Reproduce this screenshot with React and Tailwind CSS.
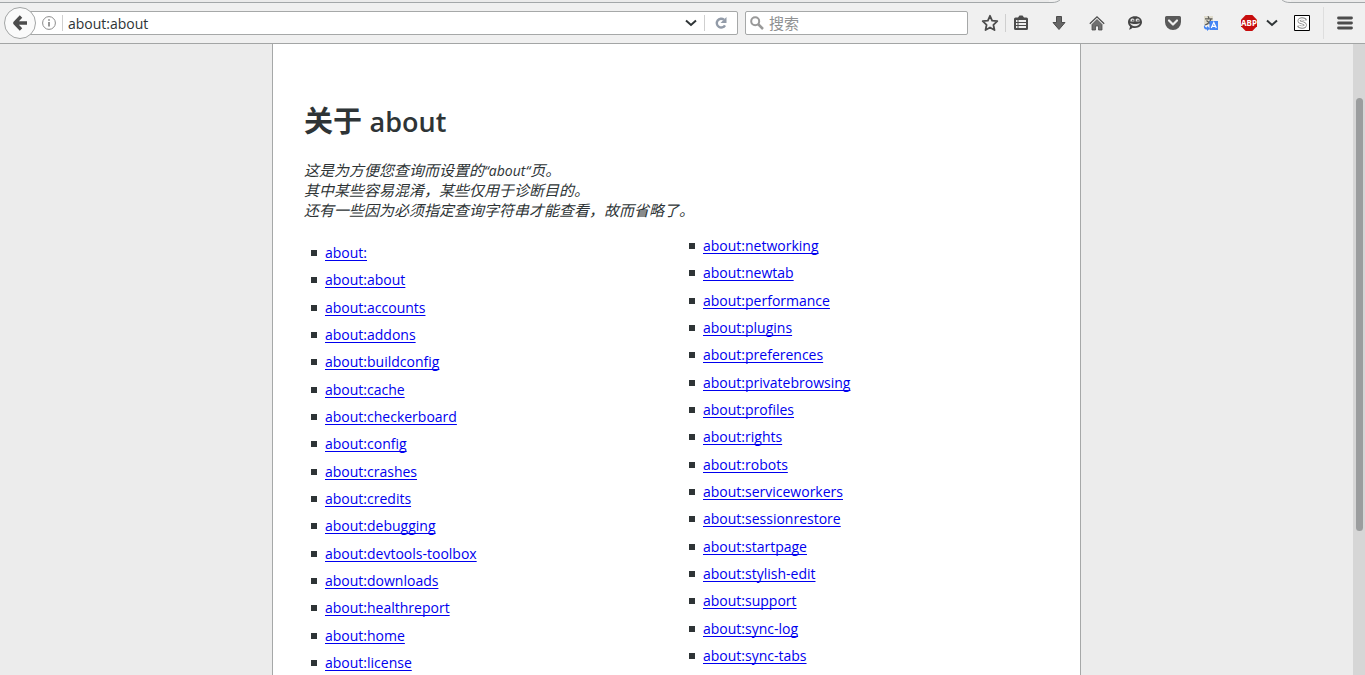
import React from 'react';

const leftLinks = [
  'about:', 'about:about', 'about:accounts', 'about:addons', 'about:buildconfig', 'about:cache',
  'about:checkerboard', 'about:config', 'about:crashes', 'about:credits', 'about:debugging',
  'about:devtools-toolbox', 'about:downloads', 'about:healthreport', 'about:home', 'about:license',
];

const rightLinks = [
  'about:networking', 'about:newtab', 'about:performance', 'about:plugins', 'about:preferences',
  'about:privatebrowsing', 'about:profiles', 'about:rights', 'about:robots', 'about:serviceworkers',
  'about:sessionrestore', 'about:startpage', 'about:stylish-edit', 'about:support', 'about:sync-log',
  'about:sync-tabs',
];

function LinkList({ links }) {
  return (
    <ul className="flex h-[430px] flex-col justify-between pl-[7px]">
      {links.map((link) => (
        <li key={link} className="flex h-5 items-center gap-2">
          <span className="size-1.5 bg-[#2e3436]" />
          <a
            href={link}
            className="leading-5 text-[#0000ee] underline decoration-1 underline-offset-2 [text-decoration-skip-ink:none]"
          >
            {link}
          </a>
        </li>
      ))}
    </ul>
  );
}

function TabStrip() {
  return (
    <div className="flex h-[3px] shrink-0">
      <div className="flex-1 border-b border-[#a3a7a9] bg-[#ebebeb]" />
      <svg width="12" height="3" viewBox="0 0 12 3" fill="none" stroke="#a3a7a9">
        <path d="M0 2.500h3c4 0 6-1 8.500-3" />
      </svg>
      <div className="w-[218px]" />
      <svg width="12" height="3" viewBox="0 0 12 3" fill="none" stroke="#a3a7a9">
        <path d="M12 2.500h-1c-4 0-6-1-8.500-3" />
      </svg>
      <div className="w-[74px] border-b border-[#a3a7a9] bg-[#ebebeb]" />
    </div>
  );
}

function ToolButton({ label, className, children }) {
  return (
    <button type="button" aria-label={label} className={`flex h-8 shrink-0 items-center justify-center ${className}`}>
      {children}
    </button>
  );
}

function Chevron() {
  return (
    <svg width="12" height="8" viewBox="0 0 12 8" fill="none" stroke="#2e3436" strokeWidth="2">
      <path d="M1 1.500l5 4.500 5-4.500" />
    </svg>
  );
}

function Toolbar() {
  return (
    <nav className="flex h-[41px] shrink-0 items-center border-b border-[#a3a5a5] bg-[#f0f0f0]">
      <button
        type="button"
        aria-label="后退"
        className="relative z-10 ml-1 flex size-8 shrink-0 items-center justify-center rounded-full border border-[#a3a5a5] bg-[#fafafa]"
      >
        <svg width="16" height="16" viewBox="0 0 16 16" fill="none" stroke="#4c4c4c" strokeWidth="3.400" strokeLinejoin="round">
          <path d="M9 1.500L2.800 8 9 14.500M3 8h12" />
        </svg>
      </button>
      <div className="-ml-4 flex h-6 flex-1 items-center rounded-r-xs border border-[#a6a8a8] bg-white pl-[21px]">
        <svg width="14" height="14" viewBox="0 0 14 14" fill="none" stroke="#8c8c8c" className="shrink-0">
          <circle cx="7" cy="7" r="6.400" />
          <path d="M7 6v4.500M7 3.200v1.600" strokeWidth="1.800" />
        </svg>
        <div className="ml-1.5 h-4 border-l border-[#cfcfcf]" />
        <input
          aria-label="地址"
          defaultValue="about:about"
          className="ml-[5px] h-5 min-w-0 flex-1 bg-transparent text-[#2e3436] outline-none"
        />
        <button type="button" aria-label="历史记录" className="mr-[7px] flex h-5 w-3 items-center">
          <Chevron />
        </button>
        <button type="button" aria-label="重新载入" className="flex h-4 w-[33px] items-center justify-center border-l border-[#cfcfcf]">
          <svg width="14" height="14" viewBox="0 0 14 14">
            <path d="M10 3.700A4.400 4.400 0 1 0 11 9.300" fill="none" stroke="#929ba8" strokeWidth="2.400" />
            <path d="M12.500 1v6H6.500z" fill="#929ba8" />
          </svg>
        </button>
      </div>
      <div className="ml-[7px] flex h-6 w-[223px] shrink-0 items-center rounded-xs border border-[#a6a8a8] bg-white pl-1">
        <svg width="14" height="14" viewBox="0 0 14 14" fill="none" stroke="#999" className="shrink-0">
          <circle cx="5.200" cy="5.200" r="4" strokeWidth="2" />
          <path d="M8 8l5 5" strokeWidth="2.500" />
        </svg>
        <input
          aria-label="搜索"
          placeholder="搜索"
          className="ml-[5px] h-5 min-w-0 flex-1 bg-transparent text-[15px] outline-none placeholder:text-[#8f9192]"
        />
      </div>

      <ToolButton label="加入书签" className="ml-1.5 w-8">
        <svg width="18" height="18" viewBox="0 0 18 18" fill="none" stroke="#4c4c4c" strokeWidth="1.800" strokeLinejoin="round">
          <path d="M9 1.800l2.100 4.900 5.200.500-3.900 3.600 1.100 5.300L9 13.400l-4.500 2.700 1.100-5.300L1.700 7.200l5.200-.500z" />
        </svg>
      </ToolButton>
      <div className="-ml-px h-[18px] border-l border-[#cfcfcf]" />
      <ToolButton label="书签列表" className="mr-[5px] w-[29px]">
        <svg width="16" height="16" viewBox="0 0 16 16">
          <path d="M5 2.500L6.500 .5h3L11 2.500h2.500A1.500 1.500 0 0 1 15 4v9.500a1.500 1.500 0 0 1-1.500 1.500h-11A1.500 1.500 0 0 1 1 13.500V4a1.500 1.500 0 0 1 1.500-1.500z" fill="#4c4c4c" />
          <path d="M3 5h1.500v2H3zM5.500 5H13v2H5.500zM3 8h1.500v2H3zM5.500 8H13v2H5.500zM3 11h1.500v2H3zM5.500 11H13v2H5.500z" fill="#f0f0f0" />
        </svg>
      </ToolButton>
      <ToolButton label="下载" className="w-[38px]">
        <svg width="16" height="16" viewBox="0 0 16 16">
          <path d="M5.500 1.500h5v6H14L8 14.500 2 7.500h3.500z" fill="#666" stroke="#4c4c4c" strokeLinejoin="round" />
        </svg>
      </ToolButton>
      <ToolButton label="主页" className="w-[38px]">
        <svg width="16" height="16" viewBox="0 0 16 16">
          <path d="M3 9.500l5-5 5 5V15H9.500v-4h-3v4H3z" fill="#707070" stroke="#4c4c4c" strokeWidth=".8" />
          <path d="M.8 8.800L8 1.800l7.200 7" fill="none" stroke="#4c4c4c" strokeWidth="1.300" />
        </svg>
      </ToolButton>
      <ToolButton label="聊天" className="w-[38px]">
        <svg width="16" height="16" viewBox="0 0 16 16">
          <path d="M8 1.200c4.200 0 7 2.500 7 5.900s-2.800 5.900-7 5.900c-.9 0-1.700-.1-2.500-.3-1 1.100-2.200 1.700-3.500 1.800.7-.9 1-1.900 1-3C1.700 10.400 1 8.900 1 7.100c0-3.400 2.800-5.900 7-5.900z" fill="#454545" />
          <path d="M3.600 4.600c.6-1.100 2.800-1.400 3.700-.4v2.300H3.400zM8.700 4.200c.9-1 3.100-.7 3.700.4l.2 1.900H8.700z" fill="#e4e4e4" />
          <path d="M5 4.800h1.600v1.400H5zM10.200 4.800h1.600v1.400h-1.600z" fill="#666" />
          <path d="M3 8c.6 2 2.400 3.200 5 3.200s4.400-1.200 5-3.200c-.8.500-1.500.7-2.200.8-1.800.3-3.800.3-5.600 0C4.500 8.700 3.800 8.500 3 8z" fill="#e4e4e4" />
        </svg>
      </ToolButton>
      <ToolButton label="Pocket" className="w-[38px]">
        <svg width="16" height="16" viewBox="0 0 16 16">
          <path d="M1.500 1h13A1.500 1.500 0 0 1 16 2.500V7a8 8 0 0 1-16 0V2.500A1.500 1.500 0 0 1 1.500 1z" fill="#5a5a5a" />
          <path d="M4 5.500l4 4 4-4" fill="none" stroke="#f0f0f0" strokeWidth="2.200" strokeLinecap="round" strokeLinejoin="round" />
        </svg>
      </ToolButton>
      <ToolButton label="翻译" className="w-[38px]">
        <svg width="16" height="16" viewBox="0 0 16 16">
          <path d="M1 1h9v9H1z" fill="#e0dccd" />
          <path d="M2 3.800h7.500M5 1.300l1 2M8 4C7 7 5 9 2 10M3.500 5.500L7 8.500" fill="none" stroke="#5c5c58" strokeWidth="1.200" />
          <path d="M6.500 6H15v9H6.500z" fill="#4385f4" />
          <path d="M8.300 13l2.500-5.500 2.500 5.500M9.300 11.300h3" fill="none" stroke="#fff" strokeWidth="1.200" />
          <path d="M1.500 9.500c0 2 1 3 2.500 3V11l3 2.500L4 16v-1.500c-2.500 0-4-2-2.500-5z" fill="#4385f4" />
        </svg>
      </ToolButton>
      <ToolButton label="Adblock Plus" className="ml-1 w-[30px]">
        <svg width="16" height="16" viewBox="0 0 16 16">
          <path d="M4.700 0h6.600L16 4.700v6.600L11.300 16H4.700L0 11.300V4.700z" fill="#c70d0d" />
          <text x="8" y="11" textAnchor="middle" fill="#fff" fontSize="8" fontWeight="700" fontFamily="Noto Sans, sans-serif">ABP</text>
        </svg>
      </ToolButton>
      <ToolButton label="Adblock Plus 菜单" className="w-4">
        <Chevron />
      </ToolButton>
      <ToolButton label="Stylish" className="w-[43px]">
        <svg width="16" height="16" viewBox="0 0 16 16">
          <path d="M.5.500h15v15H.5z" fill="#fff" stroke="#000" />
          <path d="M11.500 5.500C11 3.500 5 3 5 5.700 5 8.500 11.300 7 11.300 10c0 3-6 2.800-6.800.5" fill="none" stroke="#888" strokeWidth="3" />
          <path d="M11.200 5.400C10.500 3.700 5 3.300 5 5.700 5 8.500 11.300 7 11.300 10c0 2.800-5.800 2.500-6.500.5" fill="none" stroke="#fff" strokeWidth="1.400" />
        </svg>
      </ToolButton>
      <div className="h-8 border-l border-[#dedede]" />
      <ToolButton label="打开菜单" className="w-[41px]">
        <svg width="16" height="14" viewBox="0 0 16 14" stroke="#4c4c4c" strokeWidth="2.800" strokeLinecap="round">
          <path d="M1.500 2h13M1.500 7h13M1.500 12h13" />
        </svg>
      </ToolButton>
    </nav>
  );
}

export default function App() {
  return (
    <div className="flex h-screen flex-col overflow-hidden bg-[#f0f0f0] font-['Open_Sans','Noto_Sans_CJK_SC',sans-serif] text-[14px] text-[#2e3436]">
      <TabStrip />
      <Toolbar />
      <div className="flex min-h-0 flex-1">
        <div className="flex flex-1 justify-center overflow-hidden bg-[#ececec]">
          <main className="w-full max-w-[809px] border-x border-[#a6a8a8] bg-white px-[31px] pt-[57px]">
            <h1 className="text-[29px] leading-10 font-semibold">
              关于 <span className="text-[27px] leading-none">about</span>
            </h1>
            <p className="mt-[19px] text-[15px] leading-5 italic">
              这是为方便您查询而设置的<span className="text-[14px] leading-none">“about“</span>页。
              <br />
              其中某些容易混淆，某些仅用于诊断目的。
              <br />
              还有一些因为必须指定查询字符串才能查看，故而省略了。
            </p>
            <div className="mt-4 grid grid-cols-2 gap-x-[11px]">
              <div className="pt-[7px]">
                <LinkList links={leftLinks} />
              </div>
              <LinkList links={rightLinks} />
            </div>
          </main>
        </div>
        <div className="w-3 shrink-0 bg-[#d6d6d6] pt-[54px] pl-[3px]">
          <div className="h-[433px] w-[7px] rounded-full bg-[#9b9d9e]" />
        </div>
      </div>
    </div>
  );
}
